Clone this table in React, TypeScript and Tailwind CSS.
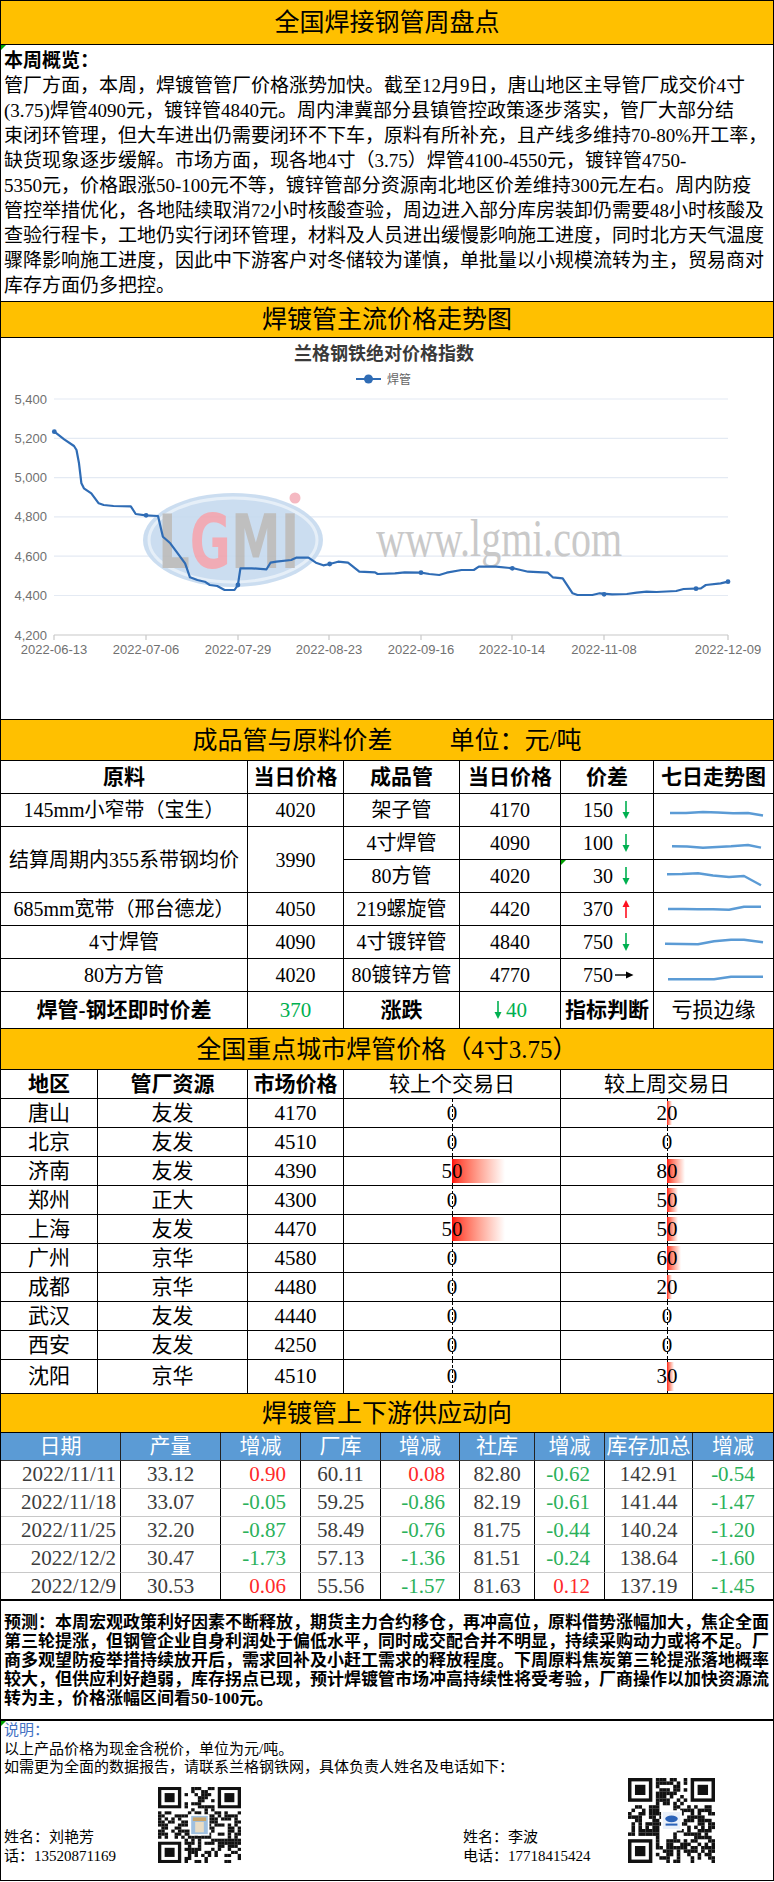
import React from 'react';

const F = "font-['Liberation_Serif','Noto_Sans_CJK_SC',serif]";
const SANS = "'Liberation Sans','Noto Sans CJK SC',sans-serif";

const summary = [
  '管厂方面，本周，焊镀管管厂价格涨势加快。截至12月9日，唐山地区主导管厂成交价4寸',
  '(3.75)焊管4090元，镀锌管4840元。周内津冀部分县镇管控政策逐步落实，管厂大部分结',
  '束闭环管理，但大车进出仍需要闭环不下车，原料有所补充，且产线多维持70-80%开工率，',
  '缺货现象逐步缓解。市场方面，现各地4寸（3.75）焊管4100-4550元，镀锌管4750-',
  '5350元，价格跟涨50-100元不等，镀锌管部分资源南北地区价差维持300元左右。周内防疫',
  '管控举措优化，各地陆续取消72小时核酸查验，周边进入部分库房装卸仍需要48小时核酸及',
  '查验行程卡，工地仍实行闭环管理，材料及人员进出缓慢影响施工进度，同时北方天气温度',
  '骤降影响施工进度，因此中下游客户对冬储较为谨慎，单批量以小规模流转为主，贸易商对',
  '库存方面仍多把控。',
];

const forecast = [
  '预测：本周宏观政策利好因素不断释放，期货主力合约移仓，再冲高位，原料借势涨幅加大，焦企全面',
  '第三轮提涨，但钢管企业自身利润处于偏低水平，同时成交配合并不明显，持续采购动力或将不足。厂',
  '商多观望防疫举措持续放开后，需求回补及小赶工需求的释放程度。下周原料焦炭第三轮提涨落地概率',
  '较大，但供应利好趋弱，库存拐点已现，预计焊镀管市场冲高持续性将受考验，厂商操作以加快资源流',
  '转为主，价格涨幅区间看50-100元。',
];

function GreenTri() {
  return (
    <span className="absolute left-0 top-0 w-0 h-0 border-t-[5px] border-t-[#00a000] border-r-[5px] border-r-transparent" />
  );
}

function Band({ children, h }: { children: React.ReactNode; h: string }) {
  return (
    <div className={`${h} bg-[#FFC000] border-y border-black flex items-center justify-center text-[25px] leading-none text-black whitespace-nowrap`}>
      {children}
    </div>
  );
}

/* ---------------- Chart ---------------- */
const linePts: [number, number][] = [
  [54.3, 431.7], [64.2, 439.3], [74, 446], [76.5, 450], [79, 463.3], [81.4, 483.3], [83.9, 488.3],
  [91.3, 493.3], [98.7, 503.3], [103.7, 505], [113.5, 506], [130.8, 506.3], [135.7, 514], [145.6, 515.3],
  [158, 516], [162.9, 536.7], [170.3, 543.3], [185.1, 563.3], [190, 577.3], [197.4, 580], [204.8, 581.7],
  [209.8, 585], [217.2, 586], [224.6, 590], [234.5, 590], [237.9, 585], [240.4, 568.3], [251.7, 568.3],
  [266.5, 569.3], [270.5, 562.7], [276.4, 561.7], [291.2, 560], [296.1, 557.7], [308.5, 557.7],
  [315.9, 562.7], [323.3, 565.3], [329.7, 564], [338.1, 561.7], [348, 562.7], [359.3, 571.7],
  [375.1, 572.3], [377.6, 574], [394.9, 573.3], [404.7, 572.3], [421, 572.7], [429.4, 574], [439.3, 575],
  [446.7, 572.7], [461.5, 570], [473.8, 570], [478.8, 566.7], [496, 566.7], [513.3, 568.3], [528.1, 571.7],
  [547.9, 572.7], [552.8, 577.3], [562.7, 578.3], [572.6, 593.3], [577.5, 595], [592.3, 595], [599.7, 593.3],
  [612, 594.3], [626.8, 594], [636.7, 592.7], [646.6, 591.7], [656.5, 592], [676.2, 591], [683.6, 589],
  [700.9, 588.3], [705.8, 585], [720.6, 583.3], [728, 581.7],
];
const markers: [number, number][] = [
  [54.3, 431.7], [146.1, 515.3], [237.9, 585], [329.7, 564], [421, 572.7], [512.3, 568.3], [604.1, 594.3],
  [696, 588.7], [728, 581.7],
];
const yTicks: [string, number][] = [
  ['5,400', 399], ['5,200', 438.3], ['5,000', 477.6], ['4,800', 516.9], ['4,600', 556.2], ['4,400', 595.5], ['4,200', 635],
];
const xTicks: [string, number][] = [
  ['2022-06-13', 54], ['2022-07-06', 146], ['2022-07-29', 238], ['2022-08-23', 329], ['2022-09-16', 421],
  ['2022-10-14', 512], ['2022-11-08', 604], ['2022-12-09', 728],
];

function Chart() {
  return (
    <svg width={772} height={381} viewBox="1 338 772 381" className="block">
      <text x={384} y={360} textAnchor="middle" fontFamily={SANS} fontWeight={700} fontSize={18} fill="#3a3a3a">
        兰格钢铁绝对价格指数
      </text>
      <line x1={356} y1={379} x2={381} y2={379} stroke="#2f6cb5" strokeWidth={2} />
      <circle cx={368.5} cy={379} r={4.5} fill="#2f6cb5" />
      <text x={387} y={383.5} fontFamily={SANS} fontSize={12} fill="#666">焊管</text>
      {yTicks.slice(0, 6).map(([, y]) => (
        <line key={y} x1={54} y1={y} x2={728} y2={y} stroke="#e4eaf3" strokeWidth={1.2} />
      ))}
      {yTicks.map(([l, y]) => (
        <text key={l} x={47} y={y + 4.5} textAnchor="end" fontFamily={SANS} fontSize={13} fill="#707070">{l}</text>
      ))}
      <line x1={54} y1={635} x2={728} y2={635} stroke="#c8c8c8" strokeWidth={1.2} />
      {xTicks.map(([l, x]) => (
        <g key={l}>
          <line x1={x} y1={635} x2={x} y2={640} stroke="#c8c8c8" strokeWidth={1.2} />
          <text x={x} y={654} textAnchor="middle" fontFamily={SANS} fontSize={13} fill="#707070">{l}</text>
        </g>
      ))}
      {/* watermark */}
      <g opacity={0.9}>
        <ellipse cx={233} cy={540} rx={90} ry={47} fill="#c6daef" />
        <ellipse cx={233} cy={540} rx={84} ry={42} fill="none" stroke="#e4eef8" strokeWidth={3} />
        <g transform="translate(158 568) scale(1 1.5)">
          <text x={0} y={0} fontFamily="'DejaVu Sans',sans-serif" fontWeight={700} fontSize={50} fill="#b9b9b9">
            L<tspan fill="#f0a3ad">G</tspan>MI
          </text>
        </g>
        <circle cx={295} cy={498} r={5.5} fill="#f5b2bc" />
      </g>
      <g transform="translate(376 556) scale(1 1.3)" opacity={0.9}>
        <text x={0} y={0} fontFamily="'Liberation Serif',serif" fontSize={40} fill="#c4c4c4">
          www.lgmi.com
        </text>
      </g>
      <polyline points={linePts.map((p) => p.join(',')).join(' ')} fill="none" stroke="#2f6cb5" strokeWidth={2.2} strokeLinejoin="round" />
      {markers.map(([x, y], i) => (
        <circle key={i} cx={x} cy={y} r={2.4} fill="#2f6cb5" />
      ))}
    </svg>
  );
}

/* ---------------- Arrows / sparklines ---------------- */
function Down() {
  return (
    <svg width={10} height={20} viewBox="0 0 10 20" className="ml-[8px]">
      <line x1={5} y1={1} x2={5} y2={14} stroke="#00B050" strokeWidth={1.6} />
      <polygon points="1.5,12 8.5,12 5,19" fill="#00B050" />
    </svg>
  );
}
function Up() {
  return (
    <svg width={10} height={20} viewBox="0 0 10 20" className="ml-[8px]">
      <line x1={5} y1={6} x2={5} y2={19} stroke="#FF1020" strokeWidth={1.6} />
      <polygon points="1.5,8 8.5,8 5,1" fill="#FF1020" />
    </svg>
  );
}
function Right() {
  return (
    <svg width={19} height={10} viewBox="0 0 19 10" className="ml-[2px]">
      <line x1={0} y1={5} x2={13} y2={5} stroke="#000" strokeWidth={1.4} />
      <polygon points="11,1.5 11,8.5 18.5,5" fill="#000" />
    </svg>
  );
}

function Spark({ pts }: { pts: number[][] }) {
  return (
    <svg width={118} height={32} viewBox="0 0 118 32" className="block">
      <polyline points={pts.map((p) => p.join(',')).join(' ')} fill="none" stroke="#5B9BD5" strokeWidth={2.4} strokeLinejoin="round" />
    </svg>
  );
}

const sparks: number[][][] = [
  [[15, 19], [31, 19], [48, 18], [63, 18.5], [78, 19.3], [93, 19], [108, 21.5]],
  [[17, 19.3], [32, 19.5], [48, 20.7], [62, 20], [76, 19.3], [93, 18], [106, 20.7]],
  [[12, 14.3], [27, 14], [43, 13.3], [58, 15.5], [74, 17], [89, 16], [106, 25.3]],
  [[13, 16], [28, 16], [43, 16.3], [58, 16.3], [74, 16.7], [89, 13.7], [106, 13.7]],
  [[10, 17.7], [27, 18], [43, 18.3], [59, 15.3], [76, 13.7], [89, 13.7], [108, 16.3]],
  [[13, 20.3], [36, 20.3], [59, 20.3], [76, 17.7], [92, 17.7], [108, 17.7]],
];

function QR({ w, h, seed, logo }: { w: number; h: number; seed: number; logo: 'a' | 'b' }) {
  const n = 25;
  let s = seed;
  const rnd = () => {
    s = (s * 16807) % 2147483647;
    return s / 2147483647;
  };
  const inFinder = (r: number, c: number) => (r < 8 && c < 8) || (r < 8 && c >= n - 8) || (r >= n - 8 && c < 8);
  const cells: React.ReactNode[] = [];
  for (let r = 0; r < n; r++) {
    for (let c = 0; c < n; c++) {
      const v = rnd();
      if (!inFinder(r, c) && v < 0.5) cells.push(<rect key={`${r}-${c}`} x={c} y={r} width={1.03} height={1.03} fill="#111" />);
    }
  }
  const finder = (x: number, y: number) => (
    <g key={`f${x}${y}`}>
      <rect x={x} y={y} width={7} height={7} fill="#111" />
      <rect x={x + 1} y={y + 1} width={5} height={5} fill="#fff" />
      <rect x={x + 2} y={y + 2} width={3} height={3} fill="#111" />
    </g>
  );
  return (
    <svg width={w} height={h} viewBox={`0 0 ${n} ${n}`} preserveAspectRatio="none" className="block shrink-0">
      <rect x={0} y={0} width={n} height={n} fill="#fff" />
      {cells}
      {finder(0, 0)}
      {finder(n - 7, 0)}
      {finder(0, n - 7)}
      {logo === 'a' ? (
        <g>
          <rect x={9.5} y={9} width={6} height={7} fill="#fff" />
          <rect x={10} y={9.5} width={5} height={6} fill="#9fc0e0" />
          <rect x={10.5} y={10} width={4} height={1.2} fill="#c9a46a" />
          <rect x={11.2} y={11.5} width={2.6} height={3.4} fill="#e8dcc4" />
        </g>
      ) : (
        <g>
          <rect x={9.5} y={9.5} width={6} height={6} fill="#fff" />
          <rect x={10} y={10} width={5} height={5} fill="#e9f0fa" />
          <ellipse cx={12.5} cy={12} rx={1.8} ry={1} fill="#2a62b8" />
          <rect x={10.8} y={13.4} width={3.4} height={0.6} fill="#2a62b8" />
        </g>
      )}
    </svg>
  );
}

/* ---------------- Data ---------------- */
const cities: [string, string, number, number, number][] = [
  ['唐山', '友发', 4170, 0, 20],
  ['北京', '友发', 4510, 0, 0],
  ['济南', '友发', 4390, 50, 80],
  ['郑州', '正大', 4300, 0, 50],
  ['上海', '友发', 4470, 50, 50],
  ['广州', '京华', 4580, 0, 60],
  ['成都', '京华', 4480, 0, 20],
  ['武汉', '友发', 4440, 0, 0],
  ['西安', '友发', 4250, 0, 0],
  ['沈阳', '京华', 4510, 0, 30],
];

const supply: string[][] = [
  ['2022/11/11', '33.12', '0.90', '60.11', '0.08', '82.80', '-0.62', '142.91', '-0.54'],
  ['2022/11/18', '33.07', '-0.05', '59.25', '-0.86', '82.19', '-0.61', '141.44', '-1.47'],
  ['2022/11/25', '32.20', '-0.87', '58.49', '-0.76', '81.75', '-0.44', '140.24', '-1.20'],
  ['2022/12/2', '30.47', '-1.73', '57.13', '-1.36', '81.51', '-0.24', '138.64', '-1.60'],
  ['2022/12/9', '30.53', '0.06', '55.56', '-1.57', '81.63', '0.12', '137.19', '-1.45'],
];

function BarCell({ v, scale, last, bottom }: { v: number; scale: number; last: boolean; bottom: boolean }) {
  return (
    <div className={`relative flex items-center justify-center border-black ${last ? '' : 'border-r'} ${bottom ? 'border-b' : ''}`}>
      <div className="absolute top-0 bottom-0 left-1/2 border-l border-dashed border-black" />
      {v > 0 && (
        <div className="absolute top-[2px] bottom-[2px] left-1/2 bg-linear-to-r from-[#FF0000] to-white" style={{ width: v * scale }} />
      )}
      <span className="relative">{v}</span>
    </div>
  );
}

export default function App() {
  const c1 = 'border-r border-b border-black flex items-center justify-center';
  const c1l = 'border-b border-black flex items-center justify-center';
  return (
    <div className={`w-[774px] border border-black bg-white text-black ${F}`}>
      {/* Title */}
      <div className="h-[44px] bg-[#FFC000] border-b border-black flex items-center justify-center text-[25px] leading-none">
        全国焊接钢管周盘点
      </div>

      {/* Summary */}
      <div className="relative h-[256px] px-[3px] pt-[3px] text-[19px] leading-[25px] whitespace-nowrap overflow-hidden">
        <GreenTri />
        <div className="font-bold">本周概览：</div>
        {summary.map((l, i) => (
          <div key={i}>{l}</div>
        ))}
      </div>

      <Band h="h-[37px]">焊镀管主流价格走势图</Band>
      <div className="h-[381px]">
        <Chart />
      </div>

      <Band h="h-[42px]">
        <span>成品管与原料价差</span>
        <span className="ml-[57px]">单位：元/吨</span>
      </Band>

      {/* Table 1 */}
      <div className="grid grid-cols-[247px_96px_116px_101px_93px_119px] grid-rows-[33px_33px_33px_33px_33px_33px_33px_36px] text-[20px] leading-none whitespace-nowrap">
        {['原料', '当日价格', '成品管', '当日价格', '价差'].map((h, i) => (
          <div key={i} className={`${c1} font-bold text-[21px]`}>{h}</div>
        ))}
        <div className={`${c1l} font-bold text-[21px]`}>七日走势图</div>

        <div className={c1}>145mm小窄带（宝生）</div>
        <div className={c1}>4020</div>
        <div className={c1}>架子管</div>
        <div className={c1}>4170</div>
        <div className="border-r border-b border-black flex items-center"><span className="w-[52px] text-right">150</span><Down /></div>
        <div className={c1l}><Spark pts={sparks[0]} /></div>

        <div className={`${c1} row-span-2`}>结算周期内355系带钢均价</div>
        <div className={`${c1} row-span-2`}>3990</div>
        <div className={c1}>4寸焊管</div>
        <div className={c1}>4090</div>
        <div className="border-r border-b border-black flex items-center"><span className="w-[52px] text-right">100</span><Down /></div>
        <div className={c1l}><Spark pts={sparks[1]} /></div>

        <div className={c1}>80方管</div>
        <div className={c1}>4020</div>
        <div className="relative border-r border-b border-black flex items-center"><GreenTri /><span className="w-[52px] text-right">30</span><Down /></div>
        <div className={c1l}><Spark pts={sparks[2]} /></div>

        <div className={c1}>685mm宽带（邢台德龙）</div>
        <div className={c1}>4050</div>
        <div className={c1}>219螺旋管</div>
        <div className={c1}>4420</div>
        <div className="border-r border-b border-black flex items-center"><span className="w-[52px] text-right">370</span><Up /></div>
        <div className={c1l}><Spark pts={sparks[3]} /></div>

        <div className={c1}>4寸焊管</div>
        <div className={c1}>4090</div>
        <div className={c1}>4寸镀锌管</div>
        <div className={c1}>4840</div>
        <div className="border-r border-b border-black flex items-center"><span className="w-[52px] text-right">750</span><Down /></div>
        <div className={c1l}><Spark pts={sparks[4]} /></div>

        <div className={c1}>80方方管</div>
        <div className={c1}>4020</div>
        <div className={c1}>80镀锌方管</div>
        <div className={c1}>4770</div>
        <div className="border-r border-b border-black flex items-center"><span className="w-[52px] text-right">750</span><Right /></div>
        <div className={c1l}><Spark pts={sparks[5]} /></div>

        <div className="border-r border-black flex items-center justify-center font-bold text-[21px]">焊管-钢坯即时价差</div>
        <div className="border-r border-black flex items-center justify-center text-[21px] text-[#00B050]">370</div>
        <div className="border-r border-black flex items-center justify-center font-bold text-[21px]">涨跌</div>
        <div className="border-r border-black flex items-center justify-center text-[21px] text-[#00B050]">
          <svg width={10} height={20} viewBox="0 0 10 20" className="mr-[3px]">
            <line x1={5} y1={1} x2={5} y2={14} stroke="#00B050" strokeWidth={1.6} />
            <polygon points="1.5,12 8.5,12 5,19" fill="#00B050" />
          </svg>
          40
        </div>
        <div className="border-r border-black flex items-center justify-center font-bold text-[21px]">指标判断</div>
        <div className="flex items-center justify-center text-[21px]">亏损边缘</div>
      </div>

      <Band h="h-[42px]">全国重点城市焊管价格（4寸3.75）</Band>

      {/* Table 2 */}
      <div className="grid grid-cols-[97px_150px_96px_217px_212px] grid-rows-[29px_29px_29px_29px_29px_29px_29px_29px_29px_29px_33px] text-[21px] leading-none whitespace-nowrap">
        <div className="border-r border-b border-black flex items-center pl-[27px] font-bold">地区</div>
        <div className={`${c1} font-bold`}>管厂资源</div>
        <div className={`${c1} font-bold`}>市场价格</div>
        <div className={c1}>较上个交易日</div>
        <div className={c1l}>较上周交易日</div>
        {cities.map(([city, mill, price, d1, d2], i) => {
          const bottom = i < cities.length - 1;
          const b = bottom ? 'border-b' : '';
          return (
            <React.Fragment key={city}>
              <div className={`border-r ${b} border-black flex items-center pl-[27px]`}>{city}</div>
              <div className={`border-r ${b} border-black flex items-center justify-center`}>{mill}</div>
              <div className={`border-r ${b} border-black flex items-center justify-center`}>{price}</div>
              <BarCell v={d1} scale={1.06} last={false} bottom={bottom} />
              <BarCell v={d2} scale={0.225} last={true} bottom={bottom} />
            </React.Fragment>
          );
        })}
      </div>

      <Band h="h-[40px]">焊镀管上下游供应动向</Band>

      {/* Table 3 */}
      <div className="grid grid-cols-[120px_100px_80px_80px_79px_75px_70px_88px_80px] grid-rows-[28px_28px_28px_28px_28px_26px] text-[21px] leading-none whitespace-nowrap">
        {['日期', '产量', '增减', '厂库', '增减', '社库', '增减', '库存加总', '增减'].map((h, i) => (
          <div
            key={i}
            className={`bg-[#5B9BD5] text-white flex items-center justify-center border-b border-b-[#3a3a3a] ${i < 8 ? 'border-r border-r-[#222]' : ''}`}
          >
            {h}
          </div>
        ))}
        {supply.map((row, ri) => {
          const b = ri < supply.length - 1 ? 'border-b border-b-[#c8c8c8]' : '';
          return row.map((v, ci) => {
            const isDelta = ci === 2 || ci === 4 || ci === 6 || ci === 8;
            const color = isDelta ? (v.startsWith('-') ? 'text-[#2BB15A]' : 'text-[#FF2A2A]') : 'text-[#3c3c3c]';
            const align =
              ci === 0
                ? 'justify-end pr-[4px]'
                : isDelta && ci !== 8
                ? 'justify-end pr-[14px]'
                : 'justify-center';
            return (
              <div key={`${ri}-${ci}`} className={`flex items-center ${align} ${color} ${b} ${ci < 8 ? 'border-r border-r-black' : ''}`}>
                {v}
              </div>
            );
          });
        })}
      </div>

      {/* Forecast */}
      <div className="h-[122px] border-y-2 border-black flex flex-col justify-center px-[3px] text-[17px] leading-[19px] font-bold whitespace-nowrap overflow-hidden">
        {forecast.map((l, i) => (
          <div key={i}>{l}</div>
        ))}
      </div>

      {/* Footer */}
      <div className="relative h-[159px] flex flex-col text-[15px] leading-[18.5px] whitespace-nowrap">
        <GreenTri />
        <div className="pl-[3px]">
          <div className="text-[#4472C4]">说明：</div>
          <div>以上产品价格为现金含税价，单位为元/吨。</div>
          <div>如需更为全面的数据报告，请联系兰格钢铁网，具体负责人姓名及电话如下：</div>
        </div>
        <div className="flex-1 flex items-end pb-[17px]">
          <div className="ml-[3px] w-[154px] leading-[19px] mb-[-3px]">
            <div>姓名：刘艳芳</div>
            <div>话：13520871169</div>
          </div>
          <QR w={83} h={76} seed={12345} logo="a" />
          <div className="ml-[222px] w-[165px] leading-[19px] mb-[-3px]">
            <div>姓名：李波</div>
            <div>电话：17718415424</div>
          </div>
          <QR w={87} h={85} seed={67891} logo="b" />
        </div>
      </div>
    </div>
  );
}
